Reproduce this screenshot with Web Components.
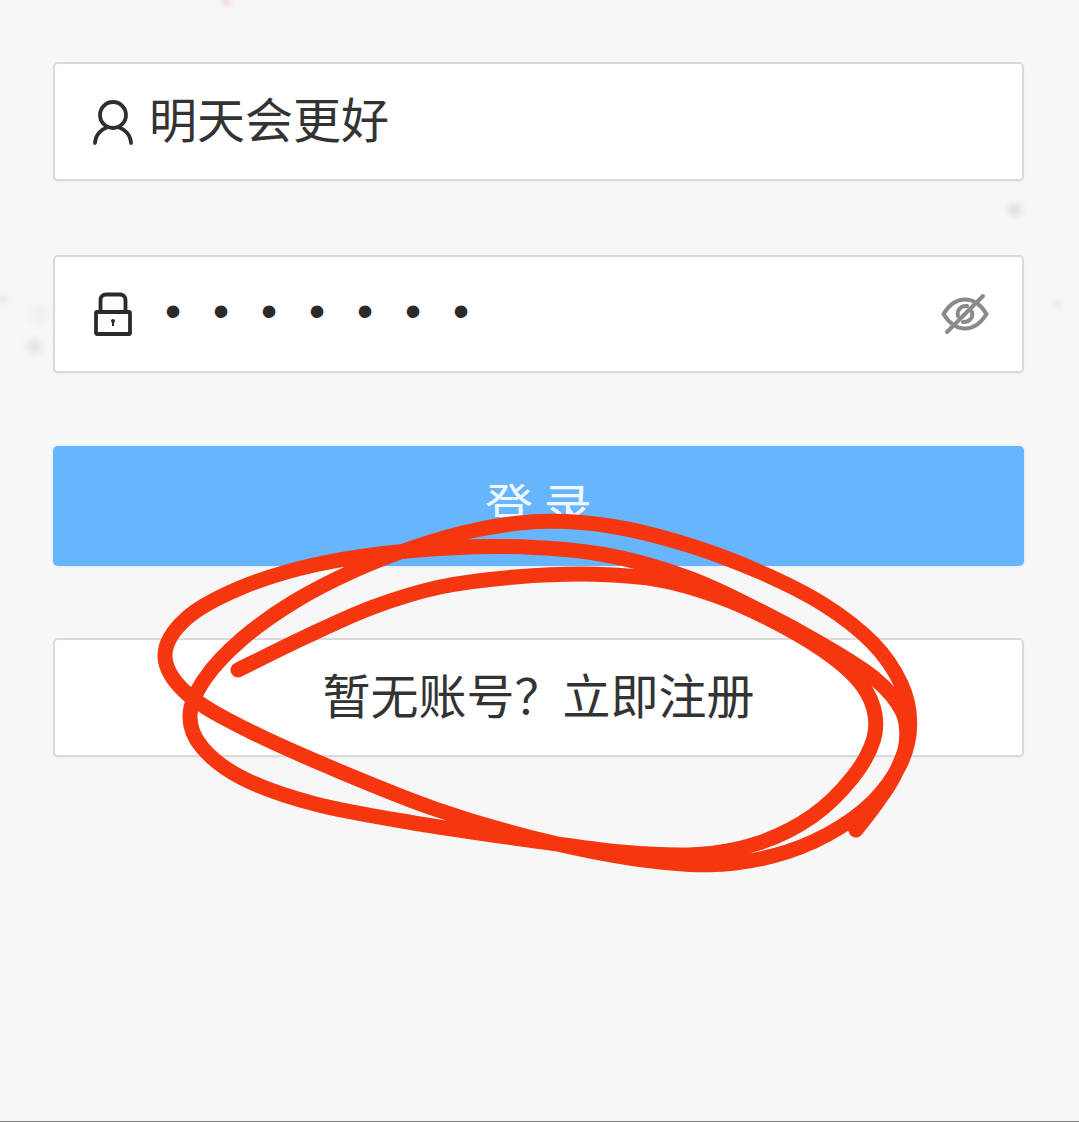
<!DOCTYPE html>
<html lang="zh">
<head>
<meta charset="utf-8">
<title>登录</title>
<style>
  html, body { margin: 0; padding: 0; background: #f7f7f7; }
  body { font-family: "Noto Sans CJK SC", "Noto Sans", sans-serif; color: #333; }
</style>
</head>
<body>
<login-page>
  <login-field style="height:119px">
    <svg slot="icon" width="44" height="48" viewBox="0 0 44 48" fill="none" stroke="#2e2e2e" stroke-width="3.8" stroke-linecap="round">
      <circle cx="22" cy="17" r="13"/>
      <path d="M4 45C4.500 36 11 31 16 29.500M40 45C39.500 36 33 31 28 29.500"/>
    </svg>
    <span class="user">明天会更好</span>
  </login-field>
  <login-field style="height:118px;margin-top:74px">
    <svg slot="icon" width="44" height="48" viewBox="0 0 44 48" fill="none" stroke="#2b2b2b" stroke-width="3.8">
      <rect x="5" y="22" width="34" height="22" rx="1"/>
      <path d="M9.500 22V10C9.500 6.500 12 4.500 15 4.500H29C32 4.500 34.500 6.500 34.500 10V22"/>
      <circle cx="22" cy="31" r="2" fill="#2b2b2b" stroke="none"/>
      <rect x="21" y="31" width="2" height="5" fill="#2b2b2b" stroke="none"/>
    </svg>
    <pass-dots count="7"></pass-dots>
    <svg slot="end" width="48" height="44" viewBox="0 0 48 44" fill="none" stroke="#8a8a8a" stroke-width="4" stroke-linecap="round">
      <path d="M2.500 22C8 13 15 7.500 24 7.500S40 13 45.500 22C40 31 33 36.500 24 36.500S8 31 2.500 22Z"/>
      <path d="M17 24C15.500 18 20 13.500 26 14M31 20C32.500 26 28 30.500 22 30"/>
      <path d="M6 40L42 4"/>
    </svg>
  </login-field>
  <login-button style="height:120px;margin-top:73px">登 录</login-button>
  <login-field center style="height:119px;margin-top:72px">暂无账号？立即注册</login-field>
  <scribble-mark></scribble-mark>
</login-page>

<script>
const fieldTemplate = document.createElement("template");
fieldTemplate.innerHTML = `
  <style>
    :host {
      display: flex;
      align-items: center;
      box-sizing: border-box;
      background: #fff;
      border: 2px solid #dadada;
      border-radius: 5px;
      padding: 0 33px 0 36px;
      font-size: 48px;
      line-height: 1;
      color: #333;
      box-shadow: 0 1px 2px rgba(0, 0, 0, .05);
    }
    :host([center]) { justify-content: center; padding: 0; }
    .icon { display: flex; }
    .icon ::slotted(svg) { display: block; margin-right: 14px; }
    .text { display: block; padding-bottom: 9px; }
    .end { display: flex; margin-left: auto; }
    .end ::slotted(svg) { display: block; }
    :host([center]) .icon, :host([center]) .end { display: none; }
  </style>
  <div class="icon"><slot name="icon"></slot></div>
  <div class="text"><slot></slot></div>
  <div class="end"><slot name="end"></slot></div>
`;

class LoginField extends HTMLElement {
  constructor() {
    super();
    this.attachShadow({ mode: "open" }).appendChild(fieldTemplate.content.cloneNode(true));
  }
}
customElements.define("login-field", LoginField);

class LoginButton extends HTMLElement {
  constructor() {
    super();
    this.attachShadow({ mode: "open" }).innerHTML = `
      <style>
        :host {
          display: flex;
          align-items: center;
          justify-content: center;
          box-sizing: border-box;
          padding-bottom: 6px;
          background: #67b6fd;
          border-radius: 5px;
          color: #eef7ff;
          font-size: 48px;
          line-height: 1;
          box-shadow: 0 0 3px rgba(102, 181, 254, .35);
        }
      </style>
      <slot></slot>
    `;
  }
}
customElements.define("login-button", LoginButton);

class PassDots extends HTMLElement {
  constructor() {
    super();
    const count = Number(this.getAttribute("count")) || 0;
    this.attachShadow({ mode: "open" }).innerHTML = `
      <style>
        :host { display: block; padding: 2px 0 0 16px; }
        span {
          display: block;
          font-family: "Liberation Sans", sans-serif;
          font-size: 46px;
          line-height: 1;
          letter-spacing: 31.900px;
          color: #2b2b2b;
        }
      </style>
      <span>${"•".repeat(count)}</span>
    `;
  }
}
customElements.define("pass-dots", PassDots);

// pen stroke of the red circle, one continuous line
const scribblePoints = [
  [238, 670], [307, 636], [373, 604], [440, 584], [507, 576], [607, 572], [660, 577], [720, 595],
  [770, 618], [827, 650], [860, 677], [878, 708], [878, 738], [860, 775], [812, 822], [765, 846],
  [693, 858], [640, 856], [523, 839], [407, 823], [307, 805], [236, 782], [194, 745], [184, 717],
  [198, 680], [240, 637], [290, 602], [353, 568], [417, 546], [473, 528], [540, 518], [610, 522],
  [693, 544], [760, 571], [827, 602], [879, 642], [906, 686], [914, 723], [905, 762], [879, 805],
  [827, 837], [777, 859], [710, 869], [640, 862], [523, 838], [440, 813], [340, 773], [240, 727],
  [180, 698], [152, 655], [176, 617], [240, 586], [307, 562], [407, 549], [507, 544], [607, 549],
  [693, 576], [760, 610], [827, 647], [882, 678], [909, 712], [910, 745], [895, 777], [876, 805],
  [856, 830],
];

// one pass of averaging, so the hand-read points don't show as bumps
function evenOut(points) {
  return points.map((p, i) => {
    if (i === 0 || i === points.length - 1) return p;
    const a = points[i - 1];
    const b = points[i + 1];
    return [(a[0] + 2 * p[0] + b[0]) / 4, (a[1] + 2 * p[1] + b[1]) / 4];
  });
}

function smoothPath(points) {
  let d = `M${points[0][0]} ${points[0][1]}`;
  for (let i = 0; i < points.length - 1; i++) {
    const p0 = points[Math.max(i - 1, 0)];
    const p1 = points[i];
    const p2 = points[i + 1];
    const p3 = points[Math.min(i + 2, points.length - 1)];
    const c1 = [p1[0] + (p2[0] - p0[0]) / 6, p1[1] + (p2[1] - p0[1]) / 6];
    const c2 = [p2[0] - (p3[0] - p1[0]) / 6, p2[1] - (p3[1] - p1[1]) / 6];
    d += `C${c1[0].toFixed(1)} ${c1[1].toFixed(1)} ${c2[0].toFixed(1)} ${c2[1].toFixed(1)} ${p2[0]} ${p2[1]}`;
  }
  return d;
}

class ScribbleMark extends HTMLElement {
  constructor() {
    super();
    this.attachShadow({ mode: "open" }).innerHTML = `
      <style>
        :host { position: absolute; left: 0; top: 0; pointer-events: none; }
        svg { display: block; }
      </style>
      <svg width="1079" height="1122" viewBox="0 0 1079 1122" fill="none">
        <path d="${smoothPath(evenOut(scribblePoints))}" stroke="#f5360f" stroke-width="15" stroke-linecap="round" stroke-linejoin="round"/>
      </svg>
    `;
  }
}
customElements.define("scribble-mark", ScribbleMark);

class LoginPage extends HTMLElement {
  constructor() {
    super();
    this.attachShadow({ mode: "open" }).innerHTML = `
      <style>
        :host {
          display: block;
          position: relative;
          box-sizing: border-box;
          width: 1079px;
          height: 1122px;
          overflow: hidden;
          background: #f7f7f7;
          border-bottom: 1px solid #7a7a7a;
        }
        .form { display: flex; flex-direction: column; padding: 62px 55px 0 53px; }
        .speck { position: absolute; border-radius: 50%; background: #e0e0e4; filter: blur(3px); }
      </style>
      <i class="speck" style="left:1008px;top:203px;width:14px;height:14px"></i>
      <i class="speck" style="left:26px;top:339px;width:16px;height:16px;background:#e6e6e8"></i>
      <i class="speck" style="left:30px;top:305px;width:20px;height:20px;background:#f0f0f1"></i>
      <i class="speck" style="left:1054px;top:301px;width:7px;height:7px"></i>
      <i class="speck" style="left:0;top:296px;width:7px;height:7px"></i>
      <i class="speck" style="left:222px;top:-3px;width:8px;height:8px;background:#ecc9d0"></i>
      <div class="form"><slot></slot></div>
    `;
  }
}
customElements.define("login-page", LoginPage);
</script>
</body>
</html>
